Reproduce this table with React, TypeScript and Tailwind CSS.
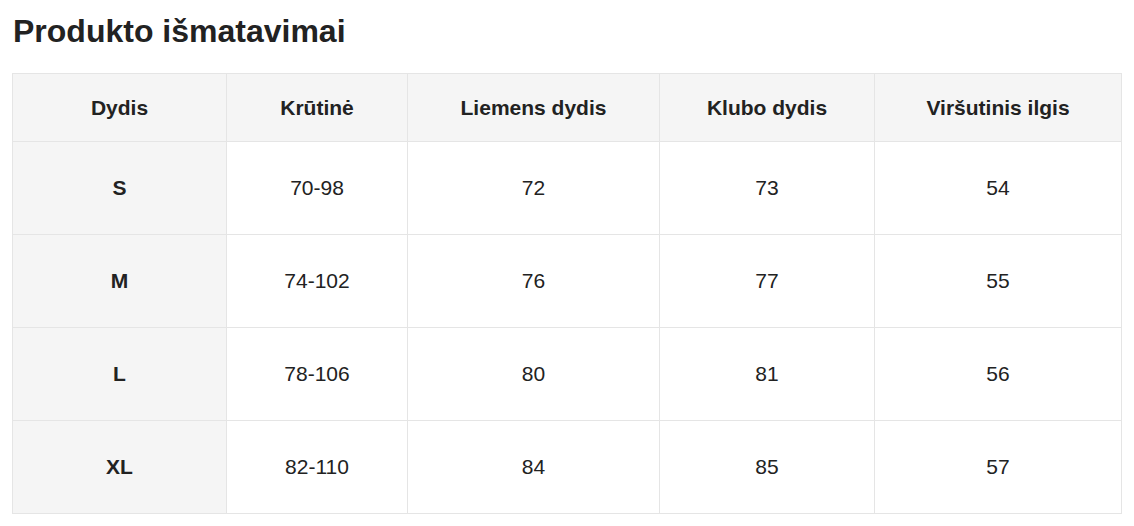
import React from "react";

const headers = ["Dydis", "Krūtinė", "Liemens dydis", "Klubo dydis", "Viršutinis ilgis"];
const rows = [
  ["S", "70-98", "72", "73", "54"],
  ["M", "74-102", "76", "77", "55"],
  ["L", "78-106", "80", "81", "56"],
  ["XL", "82-110", "84", "85", "57"],
];

export default function App() {
  return (
    <div
      className="bg-white w-[1134px] h-[526px] pl-[12px] pt-[13px] text-[#222]"
      style={{ fontFamily: '"Liberation Sans", Arial, sans-serif' }}
    >
      <h1 className="text-[32px] leading-[36px] font-bold m-0 pl-[1px]">Produkto išmatavimai</h1>
      <table className="mt-[24px] border-collapse w-[1109px] table-fixed">
        <colgroup>
          <col className="w-[214px]" />
          <col className="w-[181px]" />
          <col className="w-[252px]" />
          <col className="w-[215px]" />
          <col className="w-[247px]" />
        </colgroup>
        <thead>
          <tr className="h-[68px]">
            {headers.map((h) => (
              <th
                key={h}
                className="border border-[#e5e5e5] bg-[#f5f5f5] text-[21px] font-bold text-center align-middle p-0"
              >
                {h}
              </th>
            ))}
          </tr>
        </thead>
        <tbody>
          {rows.map((r) => (
            <tr key={r[0]} className="h-[93px]">
              {r.map((c, i) => (
                <td
                  key={i}
                  className={
                    i === 0
                      ? "border border-[#e5e5e5] bg-[#f5f5f5] text-[21px] font-bold text-center align-middle p-0"
                      : "border border-[#e5e5e5] bg-white text-[21px] text-center align-middle p-0"
                  }
                >
                  {c}
                </td>
              ))}
            </tr>
          ))}
        </tbody>
      </table>
    </div>
  );
}
